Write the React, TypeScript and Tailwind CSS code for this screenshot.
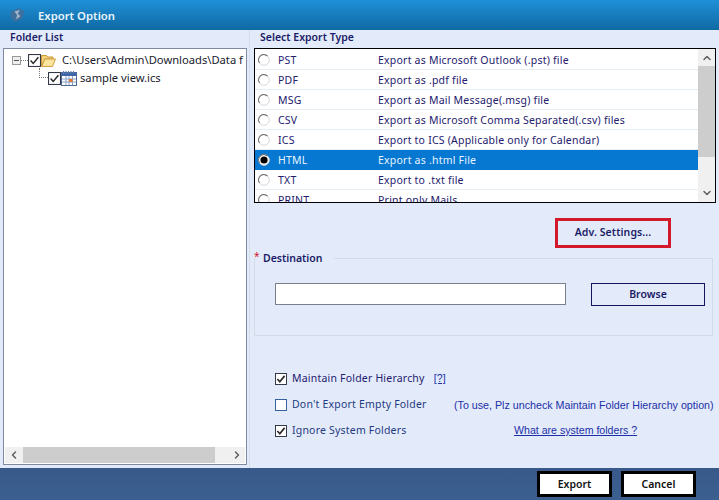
import React from "react";
import { ChevronUp, ChevronDown, ChevronLeft, ChevronRight } from "lucide-react";

const font = "font-['Noto_Sans','Open_Sans',sans-serif]";

const rows = [
  ["PST", "Export as Microsoft Outlook (.pst) file"],
  ["PDF", "Export as .pdf file"],
  ["MSG", "Export as Mail Message(.msg) file"],
  ["CSV", "Export as Microsoft Comma Separated(.csv) files"],
  ["ICS", "Export to ICS (Applicable only for Calendar)"],
  ["HTML", "Export as .html File"],
  ["TXT", "Export to .txt file"],
  ["PRINT", "Print only Mails"],
];

function Radio({ on }: { on: boolean }) {
  return (
    <svg width="12" height="12" viewBox="0 0 12 12" className="shrink-0 -mt-[2px]">
      <circle cx="6" cy="6" r="5.3" fill="#fff" stroke="#d8d8d8" strokeWidth="1" />
      <path d="M1.6 9 A5.3 5.3 0 0 1 9.5 2" fill="none" stroke="#6f6f6f" strokeWidth="1.1" />
      {on && <circle cx="6" cy="6" r="3.6" fill="#000" />}
    </svg>
  );
}

function Check({ on, color = "#2b3040", size = 14, weight = 2 }: { on: boolean; color?: string; size?: number; weight?: number }) {
  return (
    <svg width={size} height={size} viewBox="0 0 14 14" className="shrink-0">
      <rect x="0.6" y="0.6" width="12.8" height="12.8" fill="#fff" stroke={color} strokeWidth="1.1" />
      {on && <path d="M2.8 7 L5.6 10.2 L11.2 3.4" fill="none" stroke="#2a2a2a" strokeWidth={weight} />}
    </svg>
  );
}

function Logo() {
  return (
    <svg width="16" height="16" viewBox="0 0 18 18" className="shrink-0 -mt-[1px]">
      <path d="M2 5 L11 1.500 L17 5 L15 13 L7 17 L2 12 Z" fill="#3f6f9c" />
      <path d="M6 5 L12 3.500 L10 8 L13 10 L8 14 L9 9 Z" fill="#9fb4c9" />
    </svg>
  );
}

function FolderIcon() {
  return (
    <svg width="15" height="13" viewBox="0 0 15 13" className="shrink-0">
      <path d="M0.5 1.500 H5.5 L7 3 H12 V5 H4 L0.5 12 Z" fill="#f3cf78" stroke="#c89a3a" />
      <path d="M4 5 H14.5 L11.500 12.500 H0.7 Z" fill="#fbe3a0" stroke="#d0a040" />
    </svg>
  );
}

function CalIcon() {
  return (
    <svg width="16" height="15" viewBox="0 0 16 15" className="shrink-0">
      <rect x="0.5" y="1.500" width="15" height="13" fill="#fff" stroke="#4a6a9a" />
      <rect x="1" y="2" width="14" height="3" fill="#3d64a8" />
      <path d="M2.500 0 V3 M5 0 V3 M7.500 0 V3 M10 0 V3 M12.500 0 V3" stroke="#5a7ab0" strokeWidth="1" />
      <path d="M1 8 H15 M1 11 H15 M5 5 V14 M8 5 V14 M11.500 5 V14" stroke="#8aa0c8" strokeWidth="1" />
      <rect x="8" y="8" width="3.500" height="3" fill="#e07a30" />
    </svg>
  );
}

export default function App() {
  return (
    <div className={`w-[719px] h-[500px] overflow-hidden flex flex-col bg-[#e3ebfb] ${font}`}>
      <div className="h-[30px] shrink-0 flex items-center pl-[9px] bg-gradient-to-b from-[#1f90d8] to-[#0f6aa3]">
        <Logo />
        <span className="ml-[13px] mt-[2px] text-[11.3px] font-semibold text-[#e8f4fb]">Export Option</span>
      </div>

      <div className="flex-1 flex min-h-0">
        <div className="w-[250px] shrink-0 flex flex-col pl-[3px] pr-[2px] pb-[3px] border-r border-[#d5dde8]">
          <div className="h-[18px] shrink-0 pl-[7px] text-[10.5px] leading-[15px] font-semibold text-[#1c1c66]">Folder List</div>
          <div className="flex-1 flex flex-col justify-between bg-white border border-[#7d8aa0] min-h-0">
            <div className="pt-[2px] pl-[8px] text-[11.2px] text-[#1a1a2e]">
              <div className="flex items-center h-[18px] whitespace-nowrap overflow-hidden">
                <span className="w-[9px] h-[9px] shrink-0 border border-[#9a9a9a] bg-[#eee] flex items-center justify-center">
                  <span className="w-[5px] h-px bg-[#555]" />
                </span>
                <span className="w-[7px] shrink-0 border-t border-dotted border-[#777]" />
                <Check on size={13} weight={1.6} />
                <FolderIcon />
                <span className="ml-[6px]">C:\Users\Admin\Downloads\Data f</span>
              </div>
              <div className="flex items-center h-[18px]">
                <span className="ml-[27px] w-[9px] h-[10px] -mt-[10px] shrink-0 border-l border-b border-dotted border-[#777]" />
                <Check on size={13} weight={1.6} />
                <CalIcon />
                <span className="ml-[3px]">sample view.ics</span>
              </div>
            </div>
            <div className="h-[16px] mx-[1px] mb-[1px] shrink-0 flex items-center bg-[#f0f0f0]">
              <div className="w-[18px] flex justify-center"><ChevronLeft size={12} strokeWidth={3} color="#606060" /></div>
              <div className="w-[192px] h-full bg-[#cdcdcd]" />
              <div className="flex-1 flex justify-end pr-[2px]"><ChevronRight size={12} strokeWidth={3} color="#606060" /></div>
            </div>
          </div>
        </div>

        <div className="flex-1 flex flex-col min-w-0 pl-[4px] pr-[3px]">
          <div className="h-[18px] shrink-0 pl-[6px] text-[10.5px] leading-[15px] font-semibold text-[#1c1c66]">Select Export Type</div>
          <div className="h-[155px] shrink-0 flex bg-white border border-black overflow-hidden">
            <div className="flex-1 min-w-0 pt-[1px]">
              {rows.map(([k, d]) => {
                const on = k === "HTML";
                return (
                  <div key={k} className={`h-[20px] shrink-0 flex items-center pl-[3px] pt-[2px] text-[10.5px] tracking-[0.22px] border-b ${on ? "bg-[#0678d2] text-[#e8f4ff] border-[#0678d2]" : "text-[#23206e] border-[#e6edf3]"}`}>
                    <Radio on={on} />
                    <span className="w-[100px] ml-[8px]">{k}</span>
                    <span>{d}</span>
                  </div>
                );
              })}
            </div>
            <div className="w-[17px] shrink-0 flex flex-col bg-[#f0f0f0]">
              <div className="h-[17px] flex items-center justify-center"><ChevronUp size={12} strokeWidth={3} color="#606060" /></div>
              <div className="h-[91px] bg-[#cdcdcd]" />
              <div className="flex-1 flex items-end justify-center pb-[3px]"><ChevronDown size={12} strokeWidth={3} color="#606060" /></div>
            </div>
          </div>

          <div className="flex justify-end pr-[45px] mt-[15px] shrink-0">
            <button className="w-[116px] h-[30px] border-[3px] border-[#d3182b] text-[10.5px] tracking-[0.1px] font-semibold text-[#1c1c66]">Adv. Settings...</button>
          </div>

          <div className="mt-[3px] shrink-0 flex items-start">
            <span className="text-[10px] leading-[10px] text-[#d3182b] w-[9px]">*</span>
            <span className="text-[10.5px] leading-[14px] font-semibold text-[#1c1c66]">Destination</span>
            <div className="flex-1 ml-[11px] mt-[7px] mr-[3px] h-px bg-[#d3dbe6]" />
          </div>
          <div className="h-[78px] shrink-0 -mt-[7px] mr-[3px] border-l border-r border-b border-[#d3dbe6] flex items-start pl-[20px] pt-[25px]">
            <div className="w-[291px] h-[22px] bg-white border border-[#7a7f8a]" />
            <button className="ml-[25px] w-[114px] h-[23px] border border-[#15155e] text-[10.5px] font-semibold text-[#1c1c66]">Browse</button>
          </div>

          <div className="mt-[36px] pl-[21px] text-[10.5px] tracking-[0.2px] text-[#23206e] flex flex-col gap-[12px]">
            <div className="h-[14px] flex items-center">
              <Check on size={12} />
              <span className="ml-[5px]">Maintain Folder Hierarchy</span>
              <span className="ml-[9px] underline text-[#1c2fa8] font-['Liberation_Sans',sans-serif]">[?]</span>
            </div>
            <div className="h-[14px] flex items-center whitespace-nowrap">
              <Check on={false} size={12} color="#2a5a9a" />
              <span className="ml-[5px] w-[162px] shrink-0 text-[#1f3a80]">Don't Export Empty Folder</span>
              <span className="shrink-0 tracking-normal text-[#1c2fa8] text-[10.7px] font-['Liberation_Sans',sans-serif]">(To use, Plz uncheck Maintain Folder Hierarchy option)</span>
            </div>
            <div className="h-[14px] flex items-center">
              <Check on size={12} />
              <span className="ml-[5px] w-[222px] shrink-0 text-[#1f3a80]">Ignore System Folders</span>
              <span className="tracking-normal underline text-[#1c2fa8] text-[10.6px] font-['Liberation_Sans',sans-serif]">What are system folders ?</span>
            </div>
          </div>
        </div>
      </div>

      <div className="h-[32px] shrink-0 flex items-center justify-end gap-[9px] pr-[23px] bg-gradient-to-b from-[#38598a] to-[#3b6090]">
        <button className="w-[75px] h-[26px] pt-[1px] bg-white border-[3px] border-black text-[10.5px] font-semibold text-[#111]">Export</button>
        <button className="w-[75px] h-[26px] pt-[1px] bg-white border-[3px] border-black text-[10.5px] font-semibold text-[#111]">Cancel</button>
      </div>
    </div>
  );
}
